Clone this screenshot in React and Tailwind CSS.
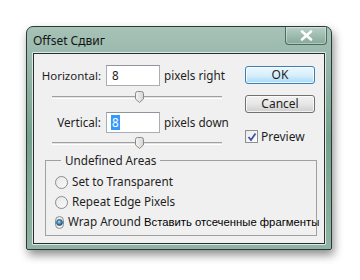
import React from "react";

const font = { fontFamily: '"Noto Sans", "Open Sans", sans-serif' };

function Slider() {
  return (
    <div className="relative ml-[18px] w-[170px] h-[12px] flex items-center">
      <div className="w-full h-[3px] border-t border-[#a0a0a0] border-b border-b-white bg-[#e3e3e3]" />
      <div className="absolute left-[83px] top-[0px] w-[9px] h-[12px]">
        <svg width="9" height="12" viewBox="0 0 9 12">
          <defs>
            <linearGradient id="th" x1="0" y1="0" x2="1" y2="0">
              <stop offset="0" stopColor="#f6f6f6" />
              <stop offset="1" stopColor="#d4d4d4" />
            </linearGradient>
          </defs>
          <path d="M0.5 2.5 Q0.5 0.5 2.5 0.5 H6.5 Q8.5 0.5 8.5 2.5 V8 L4.5 11.5 L0.5 8 Z" fill="url(#th)" stroke="#8a8a8a" />
        </svg>
      </div>
    </div>
  );
}

function Radio({ checked, children }) {
  return (
    <div className="flex items-center h-[20px]">
      <div className="w-[13px] h-[13px] rounded-full border border-[#8c8c8c] bg-gradient-to-br from-[#e8e8e8] to-[#f8f8f8] flex items-center justify-center">
        {checked && (
          <div className="w-[7px] h-[7px] rounded-full bg-[radial-gradient(circle_at_40%_35%,#9fd6f3,#1a6fa8_70%)] border border-[#23506e]" />
        )}
      </div>
      <div className="ml-[4px] text-[11.7px] text-[#1e1e1e] leading-none whitespace-nowrap">{children}</div>
    </div>
  );
}

export default function App() {
  return (
    <div className="w-[360px] h-[280px] bg-white pt-[26px] pl-[26px]" style={font}>
      <div className="w-[306px] h-[224px] rounded-t-[7px] rounded-b-[2px] border border-[#2d3b36] bg-gradient-to-b from-[#a7c2b7] via-[#74a08e] to-[#8fb3a4] shadow-[2px_5px_10px_rgba(0,0,0,0.45)] flex flex-col px-[5px] pb-[4px]">
        <div className="h-[25px] flex items-start justify-between">
          <div className="mt-[6px] ml-[1px] text-[12px] text-[#141414] leading-[16px]">Offset Сдвиг</div>
          <div className="w-[42px] h-[18px] -mr-[1px] rounded-b-[4px] border border-[#4a6b5e] border-t-0 bg-gradient-to-b from-[#b8cfc6] to-[#86a99a] flex items-center justify-center shadow-[inset_0_0_0_1px_rgba(255,255,255,0.35)]">
            <svg width="13" height="11" viewBox="0 0 13 11">
              <path d="M2 1.5 L11 9.5 M11 1.5 L2 9.5" stroke="#fefefe" strokeWidth="2.6" strokeLinecap="round" />
            </svg>
          </div>
        </div>
        <div className="flex-1 border border-[#dfe8e4] rounded-[1px]">
          <div className="h-full border border-[#26302c] bg-[#f0f0f0] text-[#1e1e1e] pt-[11px]">
            <div className="flex">
              <div className="w-[211px] flex flex-col">
                <div className="flex items-center h-[21px]">
                  <div className="w-[67px] text-right text-[11.5px] leading-none">Horizontal:</div>
                  <div className="ml-[5px] w-[54px] h-[21px] bg-white border border-[#abadb3] border-t-[#8f939b] flex items-center px-[5px] text-[11.7px] leading-none">8</div>
                  <div className="ml-[4px] text-[11.7px] leading-none whitespace-nowrap">pixels right</div>
                </div>
                <div className="mt-[5px]"><Slider /></div>
                <div className="flex items-center h-[21px] mt-[9px]">
                  <div className="w-[67px] text-right text-[11.7px] leading-none">Vertical:</div>
                  <div className="ml-[5px] w-[54px] h-[21px] bg-white border border-[#abadb3] border-t-[#8f939b] flex items-center px-[4px] text-[11.7px] leading-none">
                    <span className="bg-[#3399ff] text-white px-[1px] py-[2px]">8</span>
                  </div>
                  <div className="ml-[4px] text-[11.7px] leading-none whitespace-nowrap">pixels down</div>
                </div>
                <div className="mt-[4px]"><Slider /></div>
              </div>
              <div className="flex flex-col pt-[1px]">
                <div className="w-[70px] h-[18px] rounded-[3px] border border-[#3c7fb1] bg-gradient-to-b from-[#eaf6fd] via-[#d9f0fc] to-[#a7d9f5] flex items-center justify-center text-[12px] leading-none shadow-[inset_0_0_0_1px_rgba(255,255,255,0.7)]">OK</div>
                <div className="mt-[11px] w-[70px] h-[18px] rounded-[3px] border border-[#707070] bg-gradient-to-b from-[#f2f2f2] via-[#e6e6e6] to-[#cfcfcf] flex items-center justify-center text-[12px] leading-none shadow-[inset_0_0_0_1px_rgba(255,255,255,0.7)]">Cancel</div>
                <div className="mt-[17px] flex items-center h-[13px]">
                  <div className="w-[13px] h-[13px] border border-[#8f8f8f] bg-gradient-to-br from-[#e9e9e9] to-white flex items-center justify-center">
                    <svg width="10" height="10" viewBox="0 0 10 10">
                      <path d="M1.5 5 L4 8 L8.5 1.5" stroke="#3d54a0" strokeWidth="1.8" fill="none" />
                    </svg>
                  </div>
                  <div className="ml-[3px] text-[12px] leading-none">Preview</div>
                </div>
              </div>
            </div>
            <div className="relative mt-[11px] ml-[11px] w-[272px] h-[76px] border border-[#a0a0a0] pt-[11px] pl-[9px]">
              <div className="absolute left-[15px] -top-[8px] bg-[#f0f0f0] px-[4px] text-[11.7px] leading-[15px]">Undefined Areas</div>
              <Radio>Set to Transparent</Radio>
              <Radio>Repeat Edge Pixels</Radio>
              <Radio checked>
                Wrap Around{" "}
                <span className="text-[11.3px] text-black" style={{ fontFamily: '"Liberation Sans", "DejaVu Sans", sans-serif' }}>Вставить отсеченные фрагменты</span>
              </Radio>
            </div>
          </div>
        </div>
      </div>
    </div>
  );
}
